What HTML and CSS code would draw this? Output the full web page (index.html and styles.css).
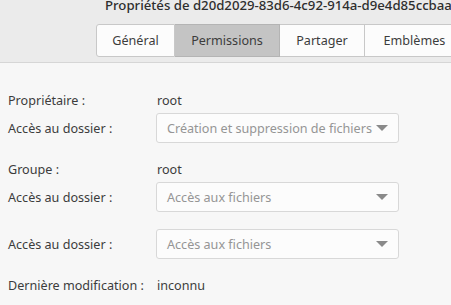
FILE: index.html
```
<!DOCTYPE html>
<html lang="fr">
<head>
<meta charset="utf-8">
<link rel="stylesheet" href="styles.css">
</head>
<body>
<div class="header">
  <div class="title">Propriétés de d20d2029-83d6-4c92-914a-d9e4d85ccbaa</div>
  <div class="tabs">
    <div class="tab t1">Général</div>
    <div class="tab t2 active">Permissions</div>
    <div class="tab t3">Partager</div>
    <div class="tab t4">Emblèmes</div>
  </div>
</div>
<div class="content">
  <div class="row text-row r-owner"><span class="label">Propriétaire :</span><span class="value">root</span></div>
  <div class="row combo-row r-c1"><span class="label">Accès au dossier :</span><div class="combo"><span class="ctext">Création et suppression de fichiers</span><span class="arrow"></span></div></div>
  <div class="row text-row r-group"><span class="label">Groupe :</span><span class="value">root</span></div>
  <div class="row combo-row r-c2"><span class="label">Accès au dossier :</span><div class="combo"><span class="ctext">Accès aux fichiers</span><span class="arrow"></span></div></div>
  <div class="row combo-row r-c3"><span class="label">Accès au dossier :</span><div class="combo"><span class="ctext">Accès aux fichiers</span><span class="arrow"></span></div></div>
  <div class="row text-row r-mod"><span class="label">Dernière modification :</span><span class="value">inconnu</span></div>
</div>
</body>
</html>
```
FILE: styles.css
```
html, body {
  margin: 0;
  padding: 0;
}
body {
  width: 451px;
  height: 305px;
  overflow: hidden;
  background: #f7f7f7;
  font-family: "Noto Sans", "Open Sans", sans-serif;
  font-size: 12.6px;
  color: #3c3c3c;
}
.header {
  height: 62px;
  background: #ebebeb;
  border-bottom: 1px solid #d6d6d6;
  overflow: hidden;
}
.title {
  margin-top: -4px;
  height: 18px;
  line-height: 18px;
  padding-left: 105px;
  white-space: nowrap;
  font-weight: 500;
  color: #2e2e2e;
  font-size: 13.2px;
}
.tabs {
  display: flex;
  margin-top: 10px;
  margin-left: 96px;
  height: 33px;
  white-space: nowrap;
}
.tab {
  box-sizing: border-box;
  height: 33px;
  line-height: 31px;
  text-align: center;
  background: #fcfcfc;
  border: 1px solid #c8c8c8;
  border-left: none;
  color: #3c3c3c;
  flex: none;
}
.t1 { width: 79px; border-left: 1px solid #c8c8c8; border-radius: 3px 0 0 3px; }
.t2 { width: 105px; }
.t3 { width: 85px; }
.t4 { width: 100px; }
.tab.active { background: #c4c4c4; border-color: #b4b4b4; }
.content {
  padding-left: 8px;
  padding-top: 27px;
}
.row {
  display: grid;
  grid-template-columns: 148px 243px;
  align-items: center;
}
.text-row { height: 20px; }
.combo-row { height: 30px; }
.r-c1 { margin-top: 3px; }
.r-group { margin-top: 16px; }
.r-c2 { margin-top: 3px; }
.r-c3 { margin-top: 17px; }
.r-mod { margin-top: 16px; }
.value { padding-left: 1px; }
.combo {
  box-sizing: border-box;
  height: 30px;
  border: 1px solid #d8d8d8;
  border-radius: 3px;
  background: #fcfcfc;
  display: flex;
  align-items: center;
  justify-content: space-between;
  padding: 0 10px 0 10px;
}
.ctext { color: #959595; white-space: nowrap; }
.arrow {
  width: 0;
  height: 0;
  border-left: 6px solid transparent;
  border-right: 6px solid transparent;
  border-top: 6px solid #8a8a8a;
}
```
